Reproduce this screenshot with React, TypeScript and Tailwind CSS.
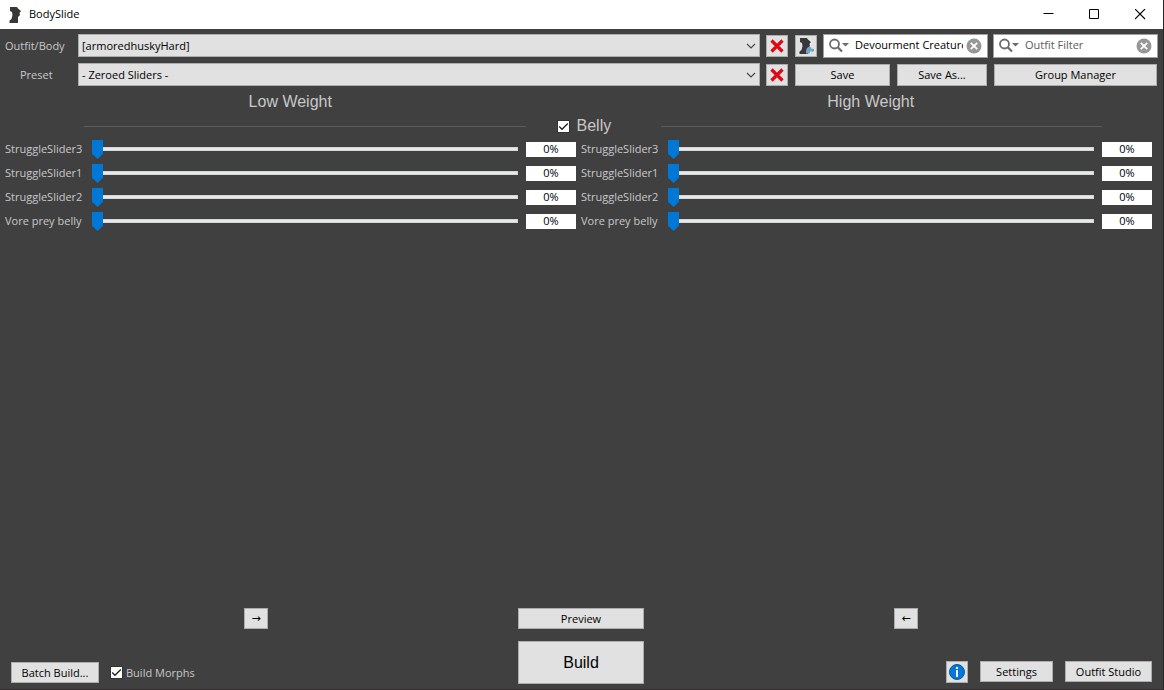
import { useState } from "react";
import type { ReactNode } from "react";

const sliders = ["StruggleSlider3", "StruggleSlider1", "StruggleSlider2", "Vore prey belly"];

const face = "border border-[#adadad] bg-[#e1e1e1] text-black hover:bg-[#e5f1fb]";

function Button({ className = "", label, children }: { className?: string; label?: string; children: ReactNode }) {
  return (
    <button type="button" aria-label={label} className={`flex shrink-0 items-center justify-center whitespace-nowrap ${face} ${className}`}>
      {children}
    </button>
  );
}

function BodyIcon({ className = "", accent = false }: { className?: string; accent?: boolean }) {
  return (
    <svg viewBox="0 0 16 16" className={className} aria-hidden="true">
      {accent && <path d="M8 0L13 2L14 5L12 9L11 6L11 3Z" fill="#f2f2f2" />}
      <path d="M2 0H9L10 1.5L13 4L11.5 6L12 8L10 10L10 16H1.5V13.5L3.5 12L4.5 8L4 5L2 4Z" fill="#383838" />
      {accent && <path d="M8 15.5V12.5L9 10L11 9H13V10.5L16 11V13L14.5 14L12.5 13L11.5 15.5Z" fill="#6fa6c6" />}
    </svg>
  );
}

function CrossIcon() {
  return (
    <svg viewBox="0 0 14 14" className="size-3.5" aria-hidden="true">
      <path d="M1.5 1.5L12.5 12.5M12.5 1.5L1.5 12.5" stroke="#e30613" strokeWidth="3.2" />
    </svg>
  );
}

function Check({ id }: { id: string }) {
  const [on, setOn] = useState(true);
  return (
    <span className="relative flex size-[13px] shrink-0">
      <input
        id={id}
        type="checkbox"
        checked={on}
        onChange={(e) => setOn(e.target.checked)}
        className="size-[13px] appearance-none border border-[#333333] bg-white"
      />
      {on && (
        <svg viewBox="0 0 13 13" className="pointer-events-none absolute inset-0 size-[13px]" aria-hidden="true">
          <path d="M2.2 6.5L5 9.3L10.8 3.5" fill="none" stroke="#222" strokeWidth="1.3" />
        </svg>
      )}
    </span>
  );
}

function Combo({ id, value }: { id: string; value: string }) {
  return (
    <div className="relative min-w-0 flex-1">
      <select id={id} className={`block h-[23px] w-full appearance-none pl-[3px] pr-6 ${face}`}>
        <option>{value}</option>
      </select>
      <svg viewBox="0 0 10 6" className="pointer-events-none absolute right-1 top-[9px] h-1.5 w-2.5" aria-hidden="true">
        <path d="M1 1L5 5L9 1" fill="none" stroke="#444" strokeWidth="1.1" />
      </svg>
    </div>
  );
}

function Search({ label, value, placeholder }: { label: string; value?: string; placeholder?: string }) {
  const [text, setText] = useState(value ?? "");
  return (
    <div className="flex h-6 w-[165px] shrink-0 items-center border border-[#a0a0a0] bg-white pl-1 pr-[5px]">
      <svg viewBox="0 0 22 16" className="h-4 w-[22px] shrink-0" aria-hidden="true">
        <circle cx="6.5" cy="6" r="4.5" fill="none" stroke="#6b6b6b" strokeWidth="1.8" />
        <path d="M9.7 9.2L14 13.5" stroke="#6b6b6b" strokeWidth="2.2" />
        <path d="M14 5H21L17.5 8.5Z" fill="#6b6b6b" />
      </svg>
      <input
        type="text"
        aria-label={label}
        value={text}
        placeholder={placeholder}
        onChange={(e) => setText(e.target.value)}
        className="ml-1 mr-[3px] h-5 w-0 flex-1 bg-transparent pb-0.5 pl-px text-black outline-none placeholder:text-[#5c5c5c]"
      />
      <button type="button" aria-label={`Clear ${label}`} onClick={() => setText("")} className="size-4 shrink-0">
        <svg viewBox="0 0 16 16" className="size-4" aria-hidden="true">
          <circle cx="8" cy="8" r="7.5" fill="#979797" />
          <path d="M4.8 4.8L11.2 11.2M11.2 4.8L4.8 11.2" stroke="white" strokeWidth="1.8" />
        </svg>
      </button>
    </div>
  );
}

function SliderRow({ side, name }: { side: string; name: string }) {
  const [value, setValue] = useState(0);
  const id = `${side}-${name}`;
  return (
    <div className="flex h-6 items-center gap-2 pl-[5px]">
      <label htmlFor={id} className="w-[79px] shrink-0 whitespace-nowrap">{name}</label>
      <input
        id={id}
        type="range"
        min={0}
        max={100}
        value={value}
        onChange={(e) => setValue(Number(e.target.value))}
        className="h-5 min-w-0 flex-1 appearance-none bg-transparent [&::-webkit-slider-runnable-track]:h-1 [&::-webkit-slider-runnable-track]:bg-[#e7eaea] [&::-webkit-slider-runnable-track]:shadow-[inset_0_0_0_1px_#d6d6d6] [&::-webkit-slider-thumb]:-mt-[7px] [&::-webkit-slider-thumb]:h-[19px] [&::-webkit-slider-thumb]:w-[11px] [&::-webkit-slider-thumb]:appearance-none [&::-webkit-slider-thumb]:bg-[#0078d7] [&::-webkit-slider-thumb]:[clip-path:polygon(0_0,100%_0,100%_72%,50%_100%,0_72%)]"
      />
      <input
        type="text"
        aria-label={`${name} ${side} value`}
        value={`${value}%`}
        onChange={(e) => setValue(Math.min(100, parseInt(e.target.value, 10) || 0))}
        className="h-[15px] w-[50px] shrink-0 bg-white text-center text-black outline-none"
      />
    </div>
  );
}

export default function App() {
  return (
    <div className="flex min-h-screen flex-col border-r border-[#262626] bg-[#404040] font-['Open_Sans','Noto_Sans',sans-serif] text-[11px] leading-4 text-[#c8c8c8]">
      <header className="flex h-[29px] items-center bg-white pl-2 text-black">
        <BodyIcon className="size-4" />
        <h1 className="ml-[5px] flex-1 pb-px">BodySlide</h1>
        <button type="button" aria-label="Minimize" className="flex h-[29px] w-[46px] items-center justify-center">
          <svg viewBox="0 0 11 11" className="size-[11px]" aria-hidden="true"><path d="M0.5 4.5H10.5" stroke="black" /></svg>
        </button>
        <button type="button" aria-label="Maximize" className="flex h-[29px] w-[46px] items-center justify-center">
          <svg viewBox="0 0 11 11" className="size-[11px]" aria-hidden="true"><path d="M0.5 0.5H9.5V9.5H0.5Z" fill="none" stroke="black" /></svg>
        </button>
        <button type="button" aria-label="Close" className="flex h-[29px] w-[46px] items-center justify-center">
          <svg viewBox="0 0 11 11" className="size-[11px]" aria-hidden="true"><path d="M0 0L10 10M10 0L0 10" stroke="black" strokeWidth="1.1" /></svg>
        </button>
      </header>

      <main className="flex flex-1 flex-col">
        <section className="flex flex-col gap-1.5 pr-[5px] pt-[5px]">
          <div className="flex h-[23px] items-center">
            <label htmlFor="outfit" className="w-[78px] shrink-0 pl-[5px]">Outfit/Body</label>
            <Combo id="outfit" value="[armoredhuskyHard]" />
            <Button label="Clear outfit" className="ml-1.5 size-[22px]"><CrossIcon /></Button>
            <Button label="Edit outfit" className="ml-[7px] mr-1.5 size-[22px]"><BodyIcon accent className="size-4" /></Button>
            <Search label="Group Filter" value="Devourment Creature" />
            <div className="w-[5px] shrink-0" />
            <Search label="Outfit Filter" placeholder="Outfit Filter" />
          </div>
          <div className="flex h-[23px] items-center">
            <label htmlFor="preset" className="w-[78px] shrink-0 pl-5">Preset</label>
            <Combo id="preset" value="- Zeroed Sliders -" />
            <Button label="Clear preset" className="ml-1.5 mr-[7px] size-[22px]"><CrossIcon /></Button>
            <Button className="h-[22px] w-[95px]">Save</Button>
            <Button className="mx-[7px] h-[22px] w-[90px]">Save As...</Button>
            <Button className="mr-px h-[22px] w-[163px]">Group Manager</Button>
          </div>
        </section>

        <div className="grid grid-cols-2 pt-1 pr-0.5 text-center font-['Liberation_Sans',sans-serif] text-base leading-6">
          <h2>Low Weight</h2>
          <h2>High Weight</h2>
        </div>

        <section className="pr-[11px]">
          <div className="flex h-[23px] items-center pl-[84px] pr-[50px] pt-px">
            <div className="h-px flex-1 bg-[#5c5c5c]" />
            <div className="flex w-[135px] items-center gap-[7px] pl-[31px]">
              <Check id="belly" />
              <label htmlFor="belly" className="font-['Liberation_Sans',sans-serif] text-base leading-5">Belly</label>
            </div>
            <div className="h-px flex-1 bg-[#5c5c5c]" />
          </div>
          <div className="grid grid-cols-2">
            {sliders.map((name) => (
              <div key={name} className="contents">
                <SliderRow side="low" name={name} />
                <SliderRow side="high" name={name} />
              </div>
            ))}
          </div>
        </section>

        <footer className="mt-auto border-b border-[#352d30] pb-[5px] pr-px">
          <div className="grid grid-cols-[1fr_126px_1fr] items-center">
            <div className="flex justify-center pr-1.5">
              <Button label="Copy low weight to high weight" className="h-[21px] w-6 font-['DejaVu_Sans',sans-serif]">→</Button>
            </div>
            <Button className="h-[21px]">Preview</Button>
            <div className="flex justify-center pl-1.5">
              <Button label="Copy high weight to low weight" className="h-[21px] w-6 font-['DejaVu_Sans',sans-serif]">←</Button>
            </div>
          </div>
          <div className="mt-3 grid grid-cols-[1fr_126px_1fr] items-end">
            <div className="flex items-center pb-px pl-[11px]">
              <Button className="h-[21px] w-[88px]">Batch Build...</Button>
              <div className="ml-[11px] flex items-center gap-[3px]">
                <Check id="morphs" />
                <label htmlFor="morphs">Build Morphs</label>
              </div>
            </div>
            <Button className="h-[43px] font-['Liberation_Sans',sans-serif] text-base">Build</Button>
            <div className="flex items-start justify-end gap-3 pb-px pr-2.5">
              <Button label="About" className="size-[22px]">
                <svg viewBox="0 0 16 16" className="size-4" aria-hidden="true">
                  <circle cx="8" cy="8" r="7.5" fill="#0078d7" stroke="#075a9f" />
                  <path d="M7 3H9V5H7ZM7 6H9V13H7Z" fill="white" />
                </svg>
              </Button>
              <Button className="h-[21px] w-[73px]">Settings</Button>
              <Button className="h-[21px] w-[87px]">Outfit Studio</Button>
            </div>
          </div>
        </footer>
      </main>
    </div>
  );
}
